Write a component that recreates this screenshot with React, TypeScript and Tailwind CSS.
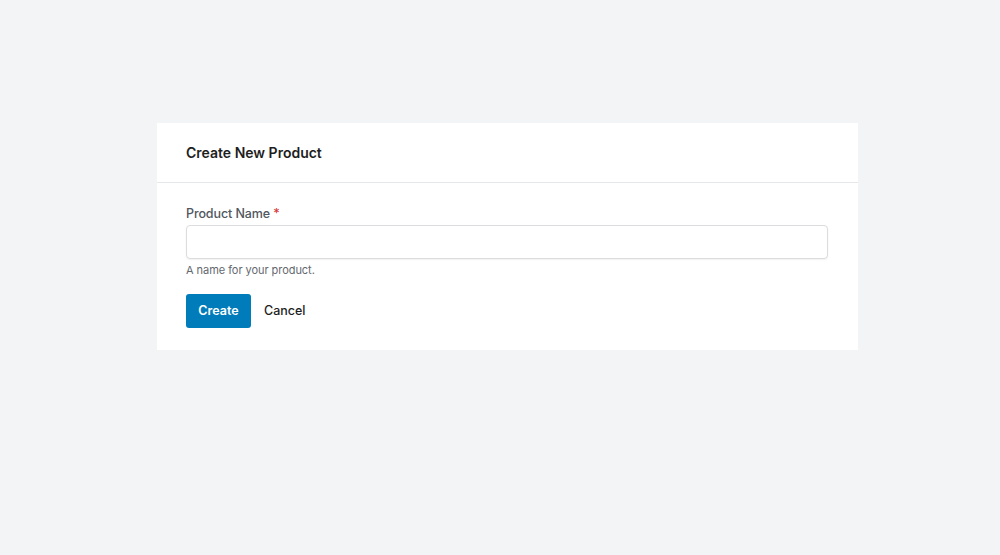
export default function App() {
  return (
    <div className="min-h-[555px] bg-[#f3f4f6] pt-[123px] pl-[157px]" style={{ fontFamily: "Inter, 'Noto Sans', sans-serif" }}>
      <div className="w-[701px] bg-white">
        <div className="h-[60px] flex items-center px-[29px] border-b border-[#e5e7eb]">
          <h1 className="text-[14px] font-semibold text-[#1e1e1e] tracking-[0px]">Create New Product</h1>
        </div>
        <div className="px-[29px] pt-[22px] pb-[22px]">
          <label className="block text-[12.5px] font-medium text-[#50575e] leading-[18px] tracking-[-0.1px]">
            Product Name <span className="text-[#d63638]">*</span>
          </label>
          <input type="text" className="mt-[2px] block w-[642px] h-[34px] rounded-[4px] border border-[#dcdcde] shadow-[0_1px_2px_rgba(0,0,0,0.06)] bg-white outline-none" />
          <p className="mt-[3px] text-[11px] text-[#646970] leading-[16px] tracking-[-0.05px]">A name for your product.</p>
          <div className="mt-[16px] flex items-center gap-[13px]">
            <button className="h-[34px] w-[65px] rounded-[3px] bg-[#007cba] text-white text-[12.5px] font-semibold">Create</button>
            <button className="text-[12.5px] font-medium text-[#1e1e1e]">Cancel</button>
          </div>
        </div>
      </div>
    </div>
  );
}
